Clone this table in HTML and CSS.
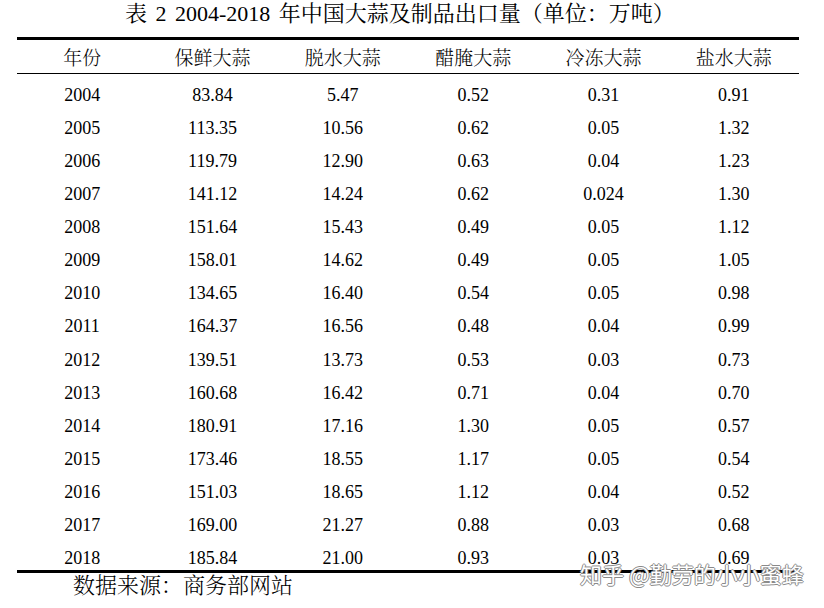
FILE: index.html
```html
<!DOCTYPE html>
<html lang="zh-CN">
<head>
<meta charset="utf-8">
<title>表2</title>
<link rel="stylesheet" href="styles.css">
</head>
<body>
<div class="page">
  <div class="title">表 2 2004-2018 年中国大蒜及制品出口量（单位：万吨）</div>
  <div class="table">
    <div class="head">
      <span>年份</span><span>保鲜大蒜</span><span>脱水大蒜</span><span>醋腌大蒜</span><span>冷冻大蒜</span><span>盐水大蒜</span>
    </div>
    <div class="body">
      <div class="row"><span>2004</span><span>83.84</span><span>5.47</span><span>0.52</span><span>0.31</span><span>0.91</span></div>
      <div class="row"><span>2005</span><span>113.35</span><span>10.56</span><span>0.62</span><span>0.05</span><span>1.32</span></div>
      <div class="row"><span>2006</span><span>119.79</span><span>12.90</span><span>0.63</span><span>0.04</span><span>1.23</span></div>
      <div class="row"><span>2007</span><span>141.12</span><span>14.24</span><span>0.62</span><span>0.024</span><span>1.30</span></div>
      <div class="row"><span>2008</span><span>151.64</span><span>15.43</span><span>0.49</span><span>0.05</span><span>1.12</span></div>
      <div class="row"><span>2009</span><span>158.01</span><span>14.62</span><span>0.49</span><span>0.05</span><span>1.05</span></div>
      <div class="row"><span>2010</span><span>134.65</span><span>16.40</span><span>0.54</span><span>0.05</span><span>0.98</span></div>
      <div class="row"><span>2011</span><span>164.37</span><span>16.56</span><span>0.48</span><span>0.04</span><span>0.99</span></div>
      <div class="row"><span>2012</span><span>139.51</span><span>13.73</span><span>0.53</span><span>0.03</span><span>0.73</span></div>
      <div class="row"><span>2013</span><span>160.68</span><span>16.42</span><span>0.71</span><span>0.04</span><span>0.70</span></div>
      <div class="row"><span>2014</span><span>180.91</span><span>17.16</span><span>1.30</span><span>0.05</span><span>0.57</span></div>
      <div class="row"><span>2015</span><span>173.46</span><span>18.55</span><span>1.17</span><span>0.05</span><span>0.54</span></div>
      <div class="row"><span>2016</span><span>151.03</span><span>18.65</span><span>1.12</span><span>0.04</span><span>0.52</span></div>
      <div class="row"><span>2017</span><span>169.00</span><span>21.27</span><span>0.88</span><span>0.03</span><span>0.68</span></div>
      <div class="row"><span>2018</span><span>185.84</span><span>21.00</span><span>0.93</span><span>0.03</span><span>0.69</span></div>
    </div>
  </div>
  <div class="source">数据来源：商务部网站</div>
  <div class="watermark">知乎 @勤劳的小小蜜蜂</div>
</div>
</body>
</html>
```

FILE: styles.css
```css
html, body {
  margin: 0;
  padding: 0;
  background: #ffffff;
}

.page {
  position: relative;
  width: 824px;
  height: 608px;
  color: #000;
  font-family: "Liberation Serif", "Noto Serif CJK SC", "Noto Sans CJK SC", serif;
}

.title {
  height: 37px;
  box-sizing: border-box;
  padding-left: 125px;
  font-size: 22px;
  line-height: 28px;
  word-spacing: 3px;
  white-space: nowrap;
}

.table {
  margin-left: 17px;
  width: 782px;
  border-top: 3px solid #000;
  border-bottom: 3px solid #000;
}

.head,
.row {
  display: grid;
  grid-template-columns: repeat(6, 1fr);
  text-align: center;
}

.head {
  height: 34px;
  box-sizing: border-box;
  padding-top: 6px;
  font-size: 19px;
  line-height: 26px;
  border-bottom: 1px solid #000;
  font-weight: 300;
}

.row {
  height: 33.07px;
  box-sizing: border-box;
  padding-top: 10px;
  font-size: 18px;
  line-height: 23px;
}

.source {
  margin-top: 2px;
  padding-left: 73px;
  font-size: 22px;
  line-height: 22px;
  font-weight: 300;
}

.watermark {
  position: absolute;
  left: 580px;
  top: 560px;
  font-family: "Noto Sans CJK SC", sans-serif;
  font-size: 22px;
  line-height: 26px;
  color: #ffffff;
  white-space: nowrap;
  text-shadow: 1px 0 0 #8a8a8a, -1px 0 0 #8a8a8a, 0 1px 0 #8a8a8a, 0 -1px 0 #8a8a8a;
}
```
